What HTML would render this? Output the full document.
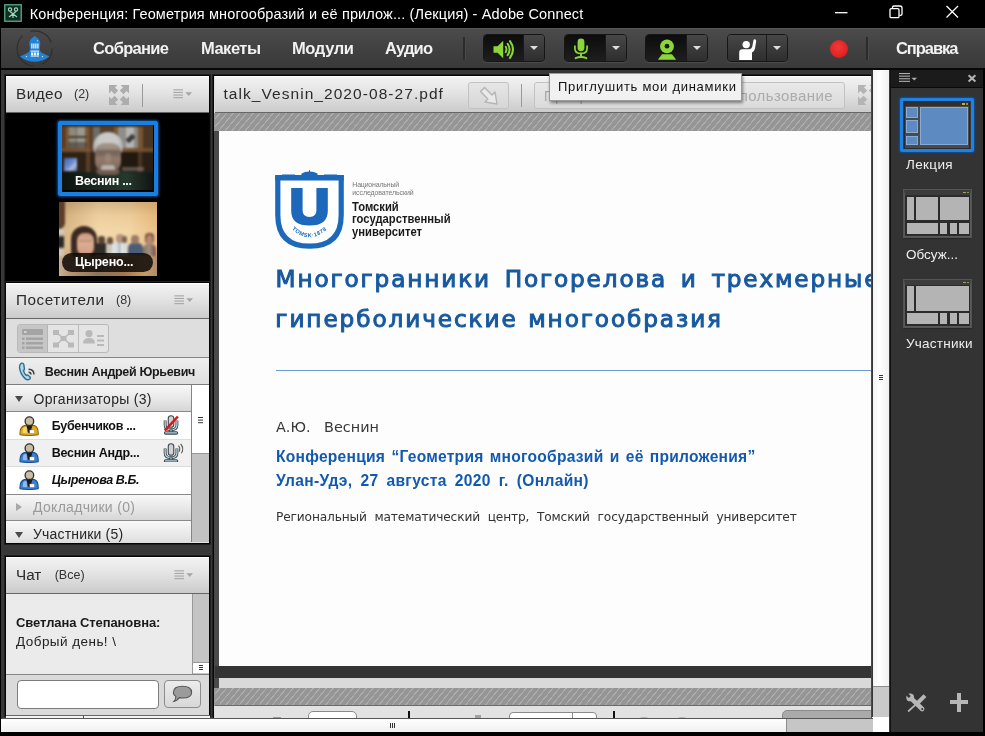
<!DOCTYPE html>
<html lang="ru">
<head>
<meta charset="utf-8">
<title>Adobe Connect</title>
<style>
*{box-sizing:border-box;margin:0;padding:0}
html,body{width:985px;height:736px;overflow:hidden;background:#000}
body{position:relative;font-family:"Liberation Sans",sans-serif;color:#222;will-change:transform}
.abs{position:absolute}
.t{position:absolute;white-space:nowrap;line-height:1}
/* title bar */
#titlebar{left:0;top:0;width:985px;height:28px;background:#000}
#title{left:29.8px;top:6.9px;font-size:14.5px;color:#fff;letter-spacing:.13px}
/* menubar */
#menubar{left:1px;top:28px;width:984px;height:40px;background:linear-gradient(#4b4b4b,#424242 45%,#393939);border-top:1px solid #565656}
.menu{top:40.1px;font-size:16.5px;font-weight:bold;color:#f2f2f2}
.msep{width:2px;top:37px;height:23px;background:#2b2b2b;box-shadow:1px 0 0 #4a4a4a}
.tbtn{top:34px;height:28px;border:1px solid #161616;border-radius:4px;overflow:hidden;box-shadow:0 1px 0 #4a4a4a}
.tbtn .l{position:absolute;left:0;top:0;bottom:0;background:linear-gradient(#0c0c0c,#1e1e1e)}
.tbtn .r{position:absolute;right:0;top:0;bottom:0;width:21px;background:linear-gradient(#474747,#2e2e2e);border-left:1px solid #1a1a1a}
.tbtn .r:after{content:"";position:absolute;left:5.7px;top:11.4px;border:4.3px solid transparent;border-top:4.5px solid #dedede;border-bottom:0}
/* workspace */
#work{left:0;top:68px;width:985px;height:665px;background:#383838;border-top:2px solid #080808}
.panel{background:#e6e6e6;border:1px solid #050505;box-shadow:0 0 0 1px #202020;overflow:hidden}
.phead{position:absolute;left:0;right:0;top:0;height:37px;background:linear-gradient(#f2f2f2,#e3e3e3 45%,#cbcbcb);border-bottom:1px solid #666;border-top:1px solid #fff}
.ptitle{font-size:15.3px;color:#2a2a2a;top:9px;left:10px}
.pcount{font-size:12.5px;color:#333;top:11.4px}
.pmenu{width:19px;height:10px}
.hatch{background:#959595 repeating-linear-gradient(130deg,transparent 0 3.2px,#adadad 3.4px 4.4px,transparent 4.6px 5.1px)}
.tb{background:#5e8ac2;border:1px solid #86abd9}
.tf{background:#2b2b2b;border:1px solid #5a5a5a;border-top:5px solid #3c3c3c;outline:1px solid #555;box-shadow:0 1px 2px #111}
.tg{background:#b4b4b4}
</style>
</head>
<body>

<!-- ================= TITLE BAR ================= -->
<div id="titlebar" class="abs">
  <svg class="abs" style="left:4px;top:4px" width="18" height="18" viewBox="0 0 18 18">
    <rect x="0.75" y="0.75" width="16.5" height="16.5" fill="#0b3325" stroke="#5a9c7e" stroke-width="1.4"/>
    <g fill="none" stroke="#a9d4be" stroke-width="1.15">
      <circle cx="6" cy="5.5" r="1.6"/><circle cx="12" cy="5.5" r="1.6"/>
      <path d="M5 13 L12 7.5 M13 13 L6 7.5 M9 10 V14"/>
    </g>
  </svg>
  <div id="title" class="t">Конференция: Геометрия многообразий и её прилож... (Лекция) - Adobe Connect</div>
  <svg class="abs" style="left:826px;top:0" width="150" height="28" viewBox="0 0 150 28">
    <g stroke="#fff" stroke-width="1.3" fill="none">
      <path d="M9 12.7 H21.5"/>
      <rect x="64" y="8.6" width="9" height="9" rx="1.2"/>
      <path d="M66.5 8.4 V7.4 Q66.5 6 68 6 H74 Q76 6 76 8 V14 Q76 15.4 74.6 15.4 H73.4"/>
      <path d="M120.5 6 L132 17.5 M132 6 L120.5 17.5"/>
    </g>
  </svg>
</div>

<!-- ================= MENU BAR ================= -->
<div id="menubar" class="abs"></div>
<svg class="abs" style="left:15px;top:29px" width="40" height="39" viewBox="0 0 40 39">
  <circle cx="19.7" cy="19.4" r="17.6" fill="none" stroke="#2b2b2b" stroke-width="1.2" stroke-dasharray="20 9 40 9 26 7" opacity=".85"/>
  <path d="M4.8 27.5 L13 23.8 Q15.8 21.5 14.6 17 Q13.6 12 16.5 9.5 L19.6 7 L23 9.5 Q26 12 25 17 Q23.8 21.5 26.6 23.8 L34.6 27.5 Q27 32.8 19.7 32.8 Q12 32.8 4.8 27.5 Z" fill="#2482d6"/>
  <g fill="#e8f2fb">
    <rect x="16.2" y="14.5" width="1.3" height="5"/><rect x="18.2" y="14.5" width="1.3" height="5"/><rect x="20.2" y="14.5" width="1.3" height="5"/><rect x="22.2" y="14.5" width="1.3" height="5"/>
    <rect x="15.6" y="21.6" width="8.4" height="1.1"/><rect x="16" y="23.4" width="2.2" height="3"/><rect x="18.9" y="23.4" width="2.2" height="3"/><rect x="21.8" y="23.4" width="2.2" height="3"/>
    <rect x="15.6" y="26.6" width="8.4" height="1"/>
    <circle cx="11.5" cy="27.6" r="0.7"/><circle cx="27.5" cy="27.6" r="0.7"/><circle cx="22.5" cy="11.8" r="0.6"/>
  </g>
</svg>
<div class="t menu" id="m1" style="left:93px;letter-spacing:-.68px">Собрание</div>
<div class="t menu" id="m2" style="left:201px;letter-spacing:-.5px">Макеты</div>
<div class="t menu" id="m3" style="left:292px;letter-spacing:-.38px">Модули</div>
<div class="t menu" id="m4" style="left:385px;letter-spacing:-.85px">Аудио</div>
<div class="abs msep" style="left:463px"></div>

<!-- speaker -->
<div class="abs tbtn" style="left:483px;width:62px"><div class="l" style="width:41px"></div><div class="r"></div>
  <svg class="abs" style="left:9px;top:5px" width="23" height="19" viewBox="0 0 23 19">
    <path d="M0.5 6.2 H4.6 L10.2 0.8 V18.2 L4.6 12.8 H0.5 Z" fill="#8cd63a"/>
    <g fill="none" stroke="#8cd63a" stroke-linecap="round">
      <path d="M12.6 6.6 Q14.6 9.5 12.6 12.4" stroke-width="1.7"/>
      <path d="M14.6 3.8 Q18.6 9.5 14.6 15.2" stroke-width="2"/>
      <path d="M17 1.2 Q23 9.5 17 17.8" stroke-width="2.1"/>
    </g>
  </svg>
</div>
<!-- mic -->
<div class="abs tbtn" style="left:564px;width:63px"><div class="l" style="width:41px"></div><div class="r"></div>
  <svg class="abs" style="left:8px;top:3px" width="16" height="22" viewBox="0 0 16 22">
    <rect x="4.6" y="0.6" width="6.8" height="12.6" rx="3.4" fill="#8cd63a"/>
    <path d="M1.9 7.5 V10.4 Q1.9 15.4 8 15.4 Q14.1 15.4 14.1 10.4 V7.5" fill="none" stroke="#8cd63a" stroke-width="1.7"/>
    <path d="M8 15.4 V19" stroke="#8cd63a" stroke-width="2"/>
    <path d="M2.6 20.2 Q8 17.8 13.4 20.2" fill="none" stroke="#8cd63a" stroke-width="1.9" stroke-linecap="round"/>
  </svg>
</div>
<!-- webcam -->
<div class="abs tbtn" style="left:645px;width:63px"><div class="l" style="width:41px"></div><div class="r"></div>
  <svg class="abs" style="left:10px;top:3px" width="22" height="23" viewBox="0 0 22 23">
    <path d="M1.8 21.8 L6 16.2 H16 L20.2 21.8 Z" fill="#8cd63a"/>
    <circle cx="11" cy="8.4" r="6.9" fill="#8cd63a"/>
    <circle cx="11" cy="8.2" r="2.4" fill="#15200a"/>
  </svg>
</div>
<!-- raise hand -->
<div class="abs tbtn" style="left:727px;width:61px"><div class="l" style="width:40px;background:linear-gradient(#474747,#2e2e2e)"></div><div class="r"></div>
  <svg class="abs" style="left:10px;top:3px" width="20" height="23" viewBox="0 0 20 23">
    <circle cx="8.2" cy="6.6" r="3.7" fill="#fff"/>
    <path d="M1.2 22 V14.5 Q1.2 11.2 4.6 11.2 H11.4 Q13.6 11.2 14.3 8.6 L15.4 2.6 Q15.7 1 17 1.2 Q18.4 1.5 18.2 3.2 L17 10.6 Q16.4 13.6 14 14.6 V22 Z" fill="#fff"/>
  </svg>
</div>
<div class="abs" style="left:830px;top:39.5px;width:18px;height:18px;border-radius:50%;background:radial-gradient(circle at 45% 40%,#f23a3a,#de1f1f 70%,#c81a1a)"></div>
<div class="abs msep" style="left:866px"></div>
<div class="t menu" id="m5" style="left:896px;letter-spacing:-1.05px">Справка</div>

<!-- ================= WORKSPACE ================= -->
<div id="work" class="abs"></div>

<!-- ===== Video panel ===== -->
<div class="abs panel" id="pvideo" style="left:5px;top:75px;width:205px;height:208px;background:#000">
  <div class="phead">
    <div class="t ptitle" id="pv" style="letter-spacing:.44px">Видео</div><div class="t pcount" id="pvc" style="left:68px">(2)</div>
    <svg class="abs" style="left:103px;top:8px" width="20" height="20" viewBox="0 0 20 20" fill="#adadad">
      <path d="M0 0 H8.4 L6 2.4 L9.2 5.6 L5.6 9.2 L2.4 6 L0 8.4 Z"/>
      <path d="M20 0 V8.4 L17.6 6 L14.4 9.2 L10.8 5.6 L14 2.4 L11.6 0 Z"/>
      <path d="M0 20 V11.6 L2.4 14 L5.6 10.8 L9.2 14.4 L6 17.6 L8.4 20 Z"/>
      <path d="M20 20 H11.6 L14 17.6 L10.8 14.4 L14.4 10.8 L17.6 14 L20 11.6 Z"/>
    </svg>
    <div class="abs" style="left:136px;top:7px;width:1px;height:23px;background:#9a9a9a"></div>
    <svg class="abs pmenu" style="left:166.5px;top:12px" viewBox="0 0 19 10"><g fill="#a6a6a6"><rect x="0.4" y="0.3" width="9.6" height="1.1"/><rect x="0.4" y="2.9" width="9.6" height="1.1"/><rect x="0.4" y="5.5" width="9.6" height="1.1"/><rect x="0.4" y="8.1" width="9.6" height="1.1"/><path d="M12.4 3.2 H19 L15.7 6.9 Z"/></g></svg>
  </div>
  <!-- video 1 -->
  <div class="abs" style="left:52px;top:44.7px;width:100px;height:75px;border:4px solid #1b7fe2;border-radius:2px;box-shadow:0 0 2.5px 1px #0e4f96"></div>
  <div class="abs" style="left:56px;top:49px;width:91px;height:65px;overflow:hidden;background:#3a2a1c">
   <div class="abs" style="left:-2px;top:-2px;width:95px;height:69px;filter:blur(.9px)">
    <!-- cabinet top -->
    <div class="abs" style="left:0;top:0;width:95px;height:30px;background:linear-gradient(90deg,#5a3d24 0 6px,#7d5a38 6px 9px,#8b8a82 9px 16px,#6a6a64 16px 17px,#9a9890 17px 25px,#7d5a38 25px 29px,#5b4029 29px 33px,#6d6c66 33px 40px,#55402c 40px 54px,#7b5936 54px 58px,#8d8e8a 58px 66px,#b4b6b4 66px 74px,#8a8a86 74px 78px,#7a5533 78px 83px,#4a3422 83px 95px)"></div>
    <div class="abs" style="left:0;top:0;width:95px;height:4px;background:#4a321e"></div>
    <div class="abs" style="left:8px;top:13px;width:19px;height:1.5px;background:#4c3a28"></div>
    <div class="abs" style="left:8px;top:19px;width:19px;height:6px;background:rgba(60,52,44,.55)"></div>
    <div class="abs" style="left:66px;top:13px;width:9px;height:5px;background:#3c3a3a;transform:rotate(-42deg)"></div>
    <div class="abs" style="left:0;top:25px;width:95px;height:4px;background:linear-gradient(90deg,#6b4a2c,#7a5634 30%,#4a3422 36%,#4a3422 62%,#7a5634 68%,#6b4a2c)"></div>
    <!-- shelf dark -->
    <div class="abs" style="left:0;top:29px;width:95px;height:22px;background:linear-gradient(90deg,#2e2117 0 26px,#5a3f28 26px 30px,#33251a 30px 60px,#21180f 60px 78px,#4a3523 78px 82px,#2a1e14 82px)"></div>
    <div class="abs" style="left:4px;top:35px;width:13px;height:13px;background:linear-gradient(135deg,#3f5fa8,#6d8fd0 50%,#aebfe0 70%,#4a68b0)"></div>
    <div class="abs" style="left:62px;top:44px;width:22px;height:4px;background:rgba(150,140,130,.5)"></div>
    <!-- head -->
    <div class="abs" style="left:33px;top:9px;width:30px;height:24px;border-radius:15px 15px 8px 8px;background:radial-gradient(ellipse at 50% 42%,#c9c9c8 0 45%,#aeadab 75%,#858380 100%)"></div>
    <div class="abs" style="left:34.5px;top:20px;width:26px;height:31px;border-radius:9px 9px 13px 13px;background:linear-gradient(#a99a8e 0,#9c8b7e 18%,#73625a 28%,#7d6a5f 38%,#917a6c 50%,#8a7264 68%,#77635a 85%,#6a564b)"></div>
    <div class="abs" style="left:44.5px;top:30px;width:6px;height:10px;border-radius:3px;background:rgba(160,138,122,.7)"></div>
    <div class="abs" style="left:41px;top:42px;width:14px;height:4.5px;border-radius:3px 3px 1px 1px;background:#b9b2ac"></div>
    <!-- jacket / bottom -->
    <div class="abs" style="left:0;top:49px;width:95px;height:22px;background:linear-gradient(90deg,#0d100e 0,#15201a 25%,#1d2c23 45%,#253a2e 70%,#1a251e 85%,#0e120f)"></div>
    <div class="abs" style="left:36px;top:47px;width:24px;height:5px;border-radius:0 0 10px 10px;background:#6f5b50"></div>
   </div>
  </div>
  <div class="t" style="left:69px;top:99.4px;font-size:12.5px;font-weight:bold;color:#fff;letter-spacing:-.27px" id="v1">Веснин ...</div>
  <!-- video 2 -->
  <div class="abs" style="left:52.5px;top:126.3px;width:98.5px;height:73.3px;overflow:hidden;background:#ecc898">
   <div class="abs" style="left:-2px;top:-2px;width:103px;height:78px;filter:blur(.9px)">
    <div class="abs" style="left:0;top:0;width:103px;height:78px;background:linear-gradient(#c8a678 0,#d9b684 8px,#e9c691 15px,#f1d2a0 30px,#efcf9c 50px,#d8b284 60px,#c9a47a 78px)"></div>
    <div class="abs" style="left:0;top:0;width:103px;height:78px;background:linear-gradient(90deg,rgba(120,80,40,.25) 0,rgba(255,240,210,.18) 40%,rgba(255,240,210,.12) 70%,rgba(215,140,60,.3) 100%)"></div>
    <!-- left edge object -->
    <div class="abs" style="left:0;top:0;width:8px;height:29px;border-radius:0 0 6px 0;background:#5d3d2a"></div>
    <div class="abs" style="left:0;top:29px;width:7px;height:30px;background:linear-gradient(#d9cdb8,#cfc3ae 20%,#2a2622 28%,#2a2622 60%,#d4c8b4 66%)"></div>
    <!-- people row -->
    <div class="abs" style="left:37px;top:43px;width:15px;height:12px;border-radius:5px 5px 0 0;background:#2e2c29"></div>
    <div class="abs" style="left:41px;top:36px;width:7px;height:8px;border-radius:3px;background:#5a4436"></div>
    <div class="abs" style="left:50px;top:37px;width:6px;height:8px;border-radius:3px;background:#6a5242"></div>
    <div class="abs" style="left:49px;top:44px;width:7px;height:10px;background:#c9c6bd"></div>
    <div class="abs" style="left:55px;top:42px;width:15px;height:13px;border-radius:4px 4px 0 0;background:linear-gradient(90deg,#dfe6e6,#cfd8da 45%,#8a9498 50%,#dde4e4 56%,#d2dada)"></div>
    <div class="abs" style="left:59px;top:34px;width:8px;height:9px;border-radius:4px;background:#b89480"></div>
    <div class="abs" style="left:65px;top:36px;width:5px;height:7px;border-radius:3px;background:#7a6252"></div>
    <div class="abs" style="left:71px;top:43px;width:15px;height:12px;border-radius:5px 5px 0 0;background:#4d5c78"></div>
    <div class="abs" style="left:74px;top:35px;width:8px;height:9px;border-radius:4px;background:#9a7c68"></div>
    <div class="abs" style="left:86px;top:44px;width:13px;height:14px;border-radius:5px 5px 0 0;background:linear-gradient(90deg,#8a7464,#a09080 50%,#7a4a38)"></div>
    <div class="abs" style="left:88px;top:33px;width:9px;height:11px;border-radius:4px;background:radial-gradient(ellipse at 50% 65%,#b98a70 0 40%,#6d4430 70%)"></div>
    <!-- woman -->
    <div class="abs" style="left:14px;top:26px;width:26px;height:32px;border-radius:13px 13px 6px 6px;background:#3a2821"></div>
    <div class="abs" style="left:20px;top:33px;width:17px;height:23px;border-radius:7px 7px 8px 8px;background:linear-gradient(#c99a80,#dcae92 40%,#d4a288 80%,#b98a72)"></div>
    <div class="abs" style="left:22px;top:40px;width:13px;height:2px;background:rgba(90,60,50,.22)"></div>
    <!-- bottom -->
    <div class="abs" style="left:0;top:56px;width:103px;height:22px;background:linear-gradient(90deg,#c9b69c 0,#b9966e 12%,#8d7458 40%,#a07650 65%,#c99a68 85%,#a88a6a)"></div>
   </div>
   <div class="abs" style="left:3.2px;top:50.5px;width:91.3px;height:18.8px;border-radius:9.4px;background:rgba(14,11,8,.86)"></div>
  </div>
  <div class="t" style="left:69px;top:180.4px;font-size:12.5px;font-weight:bold;color:#fff;letter-spacing:-.19px" id="v2">Цырено...</div>
</div>

<!-- ===== Attendees panel ===== -->
<div class="abs panel" id="patt" style="left:5px;top:282px;width:205px;height:262px">
  <div class="phead" style="height:36px">
    <div class="t ptitle" id="pa" style="top:8px;letter-spacing:.55px">Посетители</div><div class="t pcount" id="pac" style="left:110px;top:10.4px">(8)</div>
    <svg class="abs pmenu" style="left:168px;top:11px" viewBox="0 0 19 10"><g fill="#a6a6a6"><rect x="0.4" y="0.3" width="9.6" height="1.1"/><rect x="0.4" y="2.9" width="9.6" height="1.1"/><rect x="0.4" y="5.5" width="9.6" height="1.1"/><rect x="0.4" y="8.1" width="9.6" height="1.1"/><path d="M12.4 3.2 H19 L15.7 6.9 Z"/></g></svg>
  </div>
  <!-- view toolbar -->
  <div class="abs" style="left:0;top:36px;width:204px;height:39px;background:#dedede;border-bottom:1px solid #858585"></div>
  <div class="abs" style="left:11px;top:41px;width:92px;height:29px;border:1px solid #b9b9b9;border-radius:3px;background:#e4e4e4;overflow:hidden">
    <div class="abs" style="left:0;top:0;width:30px;height:27px;background:#c6c6c6;border-right:1px solid #b4b4b4"></div>
    <div class="abs" style="left:60px;top:0;width:1px;height:27px;background:#bdbdbd"></div>
    <svg class="abs" style="left:0;top:0" width="90" height="27" viewBox="0 0 90 27">
      <g fill="#a4a4a4">
        <rect x="4" y="4" width="21" height="6" rx="1"/><rect x="6" y="6" width="2.5" height="2" fill="#d2d2d2"/>
        <rect x="4" y="12.5" width="2.5" height="2.5"/><rect x="8" y="12.5" width="17" height="2.5"/>
        <rect x="4" y="17" width="2.5" height="2.5"/><rect x="8" y="17" width="17" height="2.5"/>
        <rect x="4" y="21.5" width="2.5" height="2.5"/><rect x="8" y="21.5" width="17" height="2.5"/>
      </g>
      <g fill="#b9b9b9" stroke="#b9b9b9">
        <path d="M38 7 L53 20 M53 7 L38 20" stroke-width="1.6" fill="none"/>
        <rect x="35" y="5" width="6" height="5" stroke="none"/><rect x="50" y="5" width="6" height="5" stroke="none"/>
        <rect x="35" y="17.5" width="6" height="5" stroke="none"/><rect x="50" y="17.5" width="6" height="5" stroke="none"/>
        <rect x="42.5" y="11" width="6" height="5" stroke="none"/>
      </g>
      <g fill="#b9b9b9">
        <circle cx="71" cy="8.6" r="3.6"/><path d="M65 18.5 Q65 13 71 13 Q77 13 77 18.5 Z"/>
        <rect x="79" y="10" width="7" height="2"/><rect x="79" y="14.5" width="7" height="2"/><rect x="79" y="19" width="7" height="2"/>
      </g>
    </svg>
  </div>
  <!-- speaker row -->
  <div class="abs" style="left:0;top:75px;width:204px;height:27px;background:linear-gradient(#efefef,#dedede);border-bottom:1px solid #7d7d7d"></div>
  <svg class="abs" style="left:12px;top:79px" width="20" height="20" viewBox="0 0 20 20">
    <path d="M3.4 1.2 Q1.2 2.2 1.6 6.2 Q2.4 12.4 7.2 16.6 Q9.6 18.6 11.8 17 Q12.8 16 11.8 14.8 L10 13.2 Q9 12.6 8.2 13.4 Q6.4 12.4 5.4 8.4 Q6.6 8 6.4 6.8 L5.8 2.4 Q5.2 0.8 3.4 1.2 Z" fill="#b8d8e6" stroke="#2d6f8e" stroke-width="1.4"/>
    <g fill="none" stroke="#3c3c3c" stroke-width="1.4"><path d="M10.6 10.2 Q13 10.2 13 12.6"/><path d="M10.6 7.2 Q16 7.2 16 12.6"/></g>
  </svg>
  <div class="t" style="left:38.7px;top:82.7px;font-size:12.5px;font-weight:bold;color:#1a1a1a;letter-spacing:-.32px" id="spk">Веснин Андрей Юрьевич</div>

  <!-- list -->
  <div class="abs" style="left:0;top:102px;width:186px;height:157px;background:#fff;border-right:1px solid #858585"></div>
  <div class="abs ghead" style="left:0;top:102px;width:185px;height:27px;background:linear-gradient(#f8f8f8,#e9e9e9 50%,#d6d6d6);border-bottom:1px solid #8a8a8a"></div>
  <div class="abs" style="left:9px;top:113px;border:4px solid transparent;border-top:6px solid #4a4a4a;border-bottom:0"></div>
  <div class="t" style="left:27.5px;top:109px;font-size:14px;color:#262626;letter-spacing:.29px" id="g1">Организаторы (3)</div>

  <div class="abs" style="left:0;top:156px;width:185px;height:28px;background:#f0f0f0;border-top:1px solid #dcdcdc;border-bottom:1px solid #dcdcdc"></div>
  <div class="t" style="left:45.8px;top:137.2px;font-size:12.5px;font-weight:bold;color:#111;letter-spacing:-.31px" id="n1">Бубенчиков ...</div>
  <div class="t" style="left:45.8px;top:163.5px;font-size:12.5px;font-weight:bold;color:#111;letter-spacing:-.29px" id="n2">Веснин Андр...</div>
  <div class="t" style="left:45.8px;top:190.9px;font-size:12.5px;font-weight:bold;font-style:italic;color:#111;letter-spacing:-.37px" id="n3">Цыренова В.Б.</div>

  <!-- user icons -->
  <svg class="abs" style="left:13px;top:133px" width="20" height="20" viewBox="0 0 20 20">
    <path d="M1 18.6 Q0.6 11 5.4 9.6 L10.4 8.8 L15.2 9.6 Q19.6 11 19.2 18.6 Q10 20.4 1 18.6 Z" fill="#e3aa1e" stroke="#8f6408" stroke-width="1.1"/>
    <path d="M4.4 12 Q6 10.8 7.6 11.2 L8 17 Q5.6 17.4 3.6 16.6 Z" fill="#f6d774"/>
    <path d="M7.2 9.2 L13.6 9.2 L12.4 13 L12 16 L10.4 17.6 L8.8 16 L8.4 13 Z" fill="#1b1b1b"/>
    <circle cx="10.4" cy="5.2" r="4.3" fill="#cbbda4" stroke="#2e2e2e" stroke-width="1.3"/>
    <rect x="10.8" y="14" width="4.4" height="3.2" fill="#fff" stroke="#999" stroke-width=".4"/>
  </svg>
  <svg class="abs" style="left:13px;top:160px" width="20" height="20" viewBox="0 0 20 20">
    <path d="M1 18.6 Q0.6 11 5.4 9.6 L10.4 8.8 L15.2 9.6 Q19.6 11 19.2 18.6 Q10 20.4 1 18.6 Z" fill="#3a7fd2" stroke="#1a4c92" stroke-width="1.1"/>
    <path d="M4.4 12 Q6 10.8 7.6 11.2 L8 17 Q5.6 17.4 3.6 16.6 Z" fill="#8fbcf0"/>
    <path d="M7.2 9.2 L13.6 9.2 L12.4 13 L12 16 L10.4 17.6 L8.8 16 L8.4 13 Z" fill="#1b1b1b"/>
    <circle cx="10.4" cy="5.2" r="4.3" fill="#cbbda4" stroke="#2e2e2e" stroke-width="1.3"/>
    <rect x="10.8" y="14" width="4.4" height="3.2" fill="#fff" stroke="#999" stroke-width=".4"/>
  </svg>
  <svg class="abs" style="left:13px;top:187px" width="20" height="20" viewBox="0 0 20 20">
    <path d="M1 18.6 Q0.6 11 5.4 9.6 L10.4 8.8 L15.2 9.6 Q19.6 11 19.2 18.6 Q10 20.4 1 18.6 Z" fill="#3a7fd2" stroke="#1a4c92" stroke-width="1.1"/>
    <path d="M4.4 12 Q6 10.8 7.6 11.2 L8 17 Q5.6 17.4 3.6 16.6 Z" fill="#8fbcf0"/>
    <path d="M7.2 9.2 L13.6 9.2 L12.4 13 L12 16 L10.4 17.6 L8.8 16 L8.4 13 Z" fill="#1b1b1b"/>
    <circle cx="10.4" cy="5.2" r="4.3" fill="#cbbda4" stroke="#2e2e2e" stroke-width="1.3"/>
    <rect x="10.8" y="14" width="4.4" height="3.2" fill="#fff" stroke="#999" stroke-width=".4"/>
  </svg>
  <!-- mic icons -->
  <svg class="abs" style="left:157.3px;top:132.4px" width="23.5" height="19.6" viewBox="0 0 24 21" preserveAspectRatio="none">
    <rect x="5.4" y="0.8" width="5.6" height="12.4" rx="2.8" fill="#d2d2d2" stroke="#3d4b53" stroke-width="1.15"/>
    <path d="M2.2 6 V10.6 Q2.2 15.8 8.2 15.8 Q14.2 15.8 14.2 10.6 V6" fill="none" stroke="#3d4b53" stroke-width="3"/>
    <path d="M2.2 6.4 V10.6 Q2.2 15.8 8.2 15.8 Q14.2 15.8 14.2 10.6 V6.4" fill="none" stroke="#bdd8e5" stroke-width="1.25"/>
    <rect x="6.7" y="16" width="3" height="3" fill="#b4d0de" stroke="#3d4b53" stroke-width="1"/>
    <rect x="1.4" y="17.9" width="13.6" height="2.6" rx="1.3" fill="#b4d0de" stroke="#3d4b53" stroke-width="1.1"/>
    <path d="M15.2 1.6 L1.8 16.8" stroke="#e11414" stroke-width="2.6"/>
  </svg>
  <svg class="abs" style="left:157.3px;top:159.6px" width="23.5" height="19.6" viewBox="0 0 24 21" preserveAspectRatio="none">
    <rect x="5.4" y="0.8" width="5.6" height="12.4" rx="2.8" fill="#d2d2d2" stroke="#3d4b53" stroke-width="1.15"/>
    <path d="M2.2 6 V10.6 Q2.2 15.8 8.2 15.8 Q14.2 15.8 14.2 10.6 V6" fill="none" stroke="#3d4b53" stroke-width="3"/>
    <path d="M2.2 6.4 V10.6 Q2.2 15.8 8.2 15.8 Q14.2 15.8 14.2 10.6 V6.4" fill="none" stroke="#bdd8e5" stroke-width="1.25"/>
    <rect x="6.7" y="16" width="3" height="3" fill="#b4d0de" stroke="#3d4b53" stroke-width="1"/>
    <rect x="1.4" y="17.9" width="13.6" height="2.6" rx="1.3" fill="#b4d0de" stroke="#3d4b53" stroke-width="1.1"/>
    <g fill="none" stroke="#555" stroke-width="1.1"><path d="M15.8 2.8 Q18.2 6 16.4 9.4"/><path d="M18 1 Q22 6 18.8 11"/></g>
  </svg>

  <div class="abs ghead" style="left:0;top:211px;width:185px;height:27px;background:linear-gradient(#f8f8f8,#e9e9e9 50%,#d6d6d6);border-top:1px solid #8a8a8a;border-bottom:1px solid #8a8a8a"></div>
  <div class="abs" style="left:10px;top:220px;border:4px solid transparent;border-left:6px solid #a8a8a8;border-right:0"></div>
  <div class="t" style="left:27px;top:216.6px;font-size:14px;color:#9a9a9a;letter-spacing:.31px" id="g2">Докладчики (0)</div>
  <div class="abs ghead" style="left:0;top:238px;width:185px;height:27px;background:linear-gradient(#f8f8f8,#e9e9e9 50%,#d6d6d6)"></div>
  <div class="abs" style="left:9px;top:249px;border:4px solid transparent;border-top:6px solid #4a4a4a;border-bottom:0"></div>
  <div class="t" style="left:27px;top:243.8px;font-size:14px;color:#262626;letter-spacing:.18px" id="g3">Участники (5)</div>

  <!-- list scrollbar -->
  <div class="abs" style="left:186px;top:102px;width:17px;height:157px;background:#c2c2c2"></div>
  <div class="abs" style="left:186px;top:102px;width:17px;height:69px;background:#fff;border-bottom:1px solid #999"></div>
  <div class="abs" style="left:192px;top:134px;width:5px;height:1.2px;background:#333;box-shadow:0 2.6px 0 #333,0 5.2px 0 #333"></div>
</div>

<!-- ===== Chat panel ===== -->
<div class="abs panel" id="pchat" style="left:5px;top:556px;width:205px;height:160px;background:#ebebeb">
  <div class="phead" style="height:37px">
    <div class="t ptitle" id="pc" style="top:8.5px">Чат</div><div class="t pcount" id="pcc" style="left:48.7px;top:10.9px">(Все)</div>
    <svg class="abs pmenu" style="left:168px;top:11.5px" viewBox="0 0 19 10"><g fill="#a6a6a6"><rect x="0.4" y="0.3" width="9.6" height="1.1"/><rect x="0.4" y="2.9" width="9.6" height="1.1"/><rect x="0.4" y="5.5" width="9.6" height="1.1"/><rect x="0.4" y="8.1" width="9.6" height="1.1"/><path d="M12.4 3.2 H19 L15.7 6.9 Z"/></g></svg>
  </div>
  <div class="t" style="left:10px;top:59.1px;font-size:13px;font-weight:bold;color:#1a1a1a;letter-spacing:-.08px" id="c1">Светлана Степановна:</div>
  <div class="t" style="left:10px;top:77.7px;font-size:13.5px;color:#222;letter-spacing:.45px" id="c2">Добрый день! \</div>
  <!-- chat scrollbar -->
  <div class="abs" style="left:186px;top:37px;width:17px;height:81px;background:#c4c4c4;border-left:1px solid #999"></div>
  <div class="abs" style="left:187px;top:105px;width:16px;height:11px;background:#fff;border-top:1px solid #999"></div>
  <div class="abs" style="left:193px;top:108px;width:4px;height:1px;background:#333;box-shadow:0 2px 0 #333,0 4px 0 #333"></div>
  <!-- input area -->
  <div class="abs" style="left:0;top:117px;width:204px;height:41px;background:#dadada;border-top:1px solid #858585"></div>
  <div class="abs" style="left:11px;top:123px;width:142px;height:29px;background:#fff;border:1px solid #7c7c7c;border-radius:4px"></div>
  <div class="abs" style="left:158px;top:123px;width:37px;height:28px;background:linear-gradient(#ececec,#d8d8d8);border:1px solid #8c8c8c;border-radius:4px"></div>
  <svg class="abs" style="left:165px;top:128px" width="24" height="19" viewBox="0 0 24 19">
    <path d="M11.6 1.2 Q20.6 1.2 20.6 7.4 Q20.6 13 11.6 13 Q9.6 13 8.2 12.6 Q6.6 15.8 3 16.4 Q5.2 14.4 4.8 11.4 Q2.4 9.8 2.4 7.4 Q2.4 1.2 11.6 1.2 Z" fill="#9b9b9b" stroke="#555" stroke-width="1.1"/>
  </svg>
</div>
<!-- sliver of next panel -->
<div class="abs" style="left:6px;top:715px;width:204px;height:3px;background:#f3f3f3;border-top:1px solid #666"></div>
<div class="abs" style="left:83px;top:715px;width:1px;height:3px;background:#555"></div>

<!-- ===== Main share panel ===== -->
<div class="abs" id="pmain" style="left:213px;top:75px;width:659px;height:643px;background:#dcdcdc;border-left:1px solid #050505;border-top:1px solid #050505;border-right:1px solid #4a4a4a;box-shadow:-1px -1px 0 0 #202020;overflow:hidden">
  <div class="abs" style="left:0;top:37px;width:1px;height:18px;background:#999"></div>
  <div class="abs" style="left:0;top:54.5px;width:1px;height:558px;background:#4a4a4a"></div>
  <div class="abs" style="left:0;top:612px;width:1px;height:18px;background:#999"></div>
  <div class="abs" style="left:1px;top:0;width:658px;height:643px">
  <div class="phead" style="height:37px">
    <div class="t" style="left:8.4px;top:8.9px;font-size:15.5px;color:#2b2b2b;letter-spacing:1.06px" id="fname">talk_Vesnin_2020-08-27.pdf</div>
    <div class="abs" style="left:253px;top:5px;width:41px;height:27px;border:1px solid #c2c2c2;border-radius:3px;background:linear-gradient(#e6e6e6,#d6d6d6)"></div>
    <svg class="abs" style="left:264px;top:9px" width="20" height="20" viewBox="0 0 20 20"><path d="M1.5 5.6 L5.6 1.5 L13 8.9 L16 5.9 L18 18 L5.9 16 L8.9 13 Z" fill="#e9e9e9" stroke="#b5b5b5" stroke-width="1.4" stroke-linejoin="round"/></svg>
    <div class="abs" style="left:306px;top:7px;width:1px;height:23px;background:#9a9a9a"></div>
    <div class="abs" style="left:319px;top:5px;width:311px;height:27px;border:1px solid #c2c2c2;border-radius:3px;background:linear-gradient(#e9e9e9,#dadada);overflow:hidden">
      <div class="t" style="right:11px;top:5px;font-size:15px;color:#ababab;letter-spacing:.4px">Прекратить совместное использование</div>
    </div>
    <svg class="abs" style="left:643px;top:8px" width="20" height="20" viewBox="0 0 20 20" fill="#b4b4b4">
      <path d="M0 0 H8.4 L6 2.4 L9.2 5.6 L5.6 9.2 L2.4 6 L0 8.4 Z"/>
      <path d="M0 20 V11.6 L2.4 14 L5.6 10.8 L9.2 14.4 L6 17.6 L8.4 20 Z"/>
      <path d="M20 0 V8.4 L17.6 6 L14.4 9.2 L10.8 5.6 L14 2.4 L11.6 0 Z"/>
    </svg>
  </div>
  <!-- hatched top -->
  <div class="abs hatch" style="left:0;top:37px;width:657px;height:18px"></div>
  <!-- dark left strip + slide -->
  <div class="abs" style="left:0;top:54.5px;width:4.4px;height:548.5px;background:#4a4a4a"></div>
  <div class="abs" id="slide" style="left:4.3px;top:54.5px;width:652.7px;height:536.5px;background:#fdfdfd"></div>
  <div class="abs" style="left:0;top:590px;width:657px;height:12px;background:#343434"></div>
  <div class="abs" style="left:4.3px;top:602px;width:652.7px;height:10px;background:#d9d9d9"></div>
  <div class="abs" style="left:0;top:602px;width:4.3px;height:10px;background:#4a4a4a"></div>
  <div class="abs hatch" style="left:0;top:612px;width:657px;height:18px;border-bottom:1px solid #6a6a6a"></div>
  <div class="abs" style="left:0;top:630px;width:657px;height:15px;background:#e2e2e2"></div>
  <div class="abs" style="left:93px;top:635px;width:49px;height:12px;background:#fff;border:1px solid #8a8a8a;border-radius:5px"></div>
  <div class="abs" style="left:193px;top:635px;width:2px;height:8px;background:#111"></div>
  <div class="abs" style="left:294px;top:636px;width:88px;height:12px;background:#fff;border:1px solid #8a8a8a;border-radius:4px"></div>
  <div class="abs" style="left:357px;top:636px;width:1px;height:12px;background:#8a8a8a"></div>
  <div class="abs" style="left:398px;top:635px;width:2px;height:8px;background:#111"></div>
  <div class="abs" style="left:58px;top:641px;width:8px;height:3px;background:#9a9a9a"></div><div class="abs" style="left:260px;top:639px;width:6px;height:5px;background:#a2a2a2"></div><div class="abs" style="left:424px;top:641px;width:10px;height:4px;border-radius:5px 5px 0 0;background:#b4b4b4"></div><div class="abs" style="left:462px;top:641px;width:10px;height:4px;border-radius:5px 5px 0 0;background:#b4b4b4"></div>
  <div class="abs" style="left:567px;top:634px;width:95px;height:12px;background:#aaa;border:1px solid #8a8a8a;border-radius:5px"></div>
</div>
</div>

<!-- slide content (absolute page coords) -->
<svg class="abs" style="left:274px;top:170px" width="72" height="82" viewBox="0 0 72 82">
  <path d="M3.8 7.5 H67.2 V45 Q67.2 76.2 35.5 76.2 Q3.8 76.2 3.8 45 Z" fill="#fff" stroke="#1c68ba" stroke-width="5.2"/>
  <path d="M1.2 10.5 V5.6 H8 V4.4 H21 V5.6 H27.5 V3.6 Q31 1.6 35 1.5 V0.2 H36 V1.5 Q40 1.6 43.5 3.6 V5.6 H50 V4.4 H63 V5.6 H69.8 V10.5 Z" fill="#1c68ba"/>
  <path d="M17.2 18 H28.6 V40.5 Q28.6 47 35.5 47 Q42.4 47 42.4 40.5 V18 H53.8 V41 Q53.8 55.6 35.5 55.6 Q17.2 55.6 17.2 41 Z" fill="#1c68ba"/>
  <path id="arc" d="M13.5 55 Q35.5 80 58.5 54" fill="none"/>
  <text font-family="Liberation Sans,sans-serif" font-size="5.6" font-weight="bold" fill="#1c68ba" letter-spacing=".5"><textPath href="#arc" startOffset="6">TOMSK·1878</textPath></text>
</svg>
<div class="t" style="left:352.3px;top:180.7px;font-size:7px;color:#787878;letter-spacing:-.2px" id="l1">Национальный</div>
<div class="t" style="left:352.3px;top:189.2px;font-size:7px;color:#787878;letter-spacing:-.1px" id="l2">исследовательский</div>
<div class="t" style="left:352.4px;top:200.8px;font-size:12.9px;font-weight:bold;color:#1a1a1a;transform:scaleX(.872);transform-origin:0 0" id="l3">Томский</div>
<div class="t" style="left:352.4px;top:213.1px;font-size:12.9px;font-weight:bold;color:#1a1a1a;transform:scaleX(.872);transform-origin:0 0" id="l4">государственный</div>
<div class="t" style="left:352.4px;top:226px;font-size:12.9px;font-weight:bold;color:#1a1a1a;transform:scaleX(.872);transform-origin:0 0" id="l5">университет</div>

<div class="abs" style="left:220px;top:260px;width:651px;height:80px;overflow:hidden">
  <div class="t" style="left:55.6px;top:5.8px;font-family:'DejaVu Sans','Liberation Sans',sans-serif;font-size:23.2px;color:#17599f;-webkit-text-stroke:1px #17599f;line-height:26px;letter-spacing:1.85px;word-spacing:4.5px" id="h1">Многогранники Погорелова и трехмерные</div>
  <div class="t" style="left:55.3px;top:46.2px;font-family:'DejaVu Sans','Liberation Sans',sans-serif;font-size:23.2px;color:#17599f;-webkit-text-stroke:1px #17599f;line-height:26px;letter-spacing:1.9px;word-spacing:1.3px" id="h2">гиперболические многообразия</div>
</div>
<div class="abs" style="left:276px;top:370px;width:595px;height:1px;background:#6b9dd2"></div>
<div class="t" style="left:276px;top:419.5px;font-family:'DejaVu Sans',sans-serif;font-size:14.4px;color:#383838;word-spacing:9px" id="s1">А.Ю. Веснин</div>
<div class="t" style="left:276px;top:448.6px;font-size:15.6px;font-weight:bold;color:#1259b0;letter-spacing:.25px;word-spacing:1.6px" id="s2">Конференция “Геометрия многообразий и её приложения”</div>
<div class="t" style="left:276px;top:473.2px;font-size:15.6px;font-weight:bold;color:#1259b0;letter-spacing:.32px;word-spacing:3.4px" id="s3">Улан-Удэ, 27 августа 2020 г. (Онлайн)</div>
<div class="t" style="left:276px;top:510.6px;font-family:'DejaVu Sans',sans-serif;font-size:12.2px;color:#333;letter-spacing:-.15px;word-spacing:4px" id="s4">Региональный математический центр, Томский государственный университет</div>

<!-- ===== scrollbars ===== -->
<div class="abs" style="left:873px;top:70px;width:16px;height:662px;background:#c9c9c9"></div>
<div class="abs" style="left:873px;top:70px;width:16px;height:617px;background:linear-gradient(90deg,#f4f4f4,#fff 40%,#f0f0f0);border-bottom:1px solid #8c8c8c"></div>
<div class="abs" style="left:879px;top:375px;width:4px;height:1px;background:#333;box-shadow:0 2px 0 #333,0 4px 0 #333"></div>
<div class="abs" style="left:872px;top:717px;width:17px;height:15px;background:#fff"></div>
<div class="abs" style="left:1px;top:718px;width:872px;height:14px;background:#c6c6c6;border-top:1px solid #555"></div>
<div class="abs" style="left:1px;top:719px;width:786px;height:13px;background:linear-gradient(#fff,#f0f0f0);border-right:1px solid #8c8c8c"></div>
<div class="abs" style="left:390px;top:723px;width:1px;height:5px;background:#333;box-shadow:2px 0 0 #333,4px 0 0 #333"></div>

<!-- ===== Right layouts panel ===== -->
<div class="abs" id="pright" style="left:890px;top:70px;width:93px;height:663px;background:#333;border-left:1px solid #111">
  <div class="abs" style="left:0;top:0;width:92px;height:18px;background:#1b1b1b;border-bottom:1px solid #0a0a0a"></div>
  <svg class="abs" style="left:8px;top:3px" width="19" height="10" viewBox="0 0 19 10"><g fill="#aeaeae"><rect x="0" y="0" width="11" height="1.1"/><rect x="0" y="2.6" width="11" height="1.1"/><rect x="0" y="5.2" width="11" height="1.1"/><rect x="0" y="7.8" width="11" height="1.1"/><path d="M12.5 4.8 H18 L15.25 7.6 Z"/></g></svg>
  <svg class="abs" style="left:76px;top:4px" width="10" height="9" viewBox="0 0 10 9"><path d="M1.6 1.2 L8.4 7.6 M8.4 1.2 L1.6 7.6" stroke="#b4b4b4" stroke-width="2"/></svg>

  <!-- thumb 1 selected -->
  <div class="abs" style="left:9px;top:28px;width:74px;height:54px;border:3px solid #1d82e6;border-radius:2px;background:#3a3a3a;box-shadow:0 0 2px 1px #0f4f98"></div>
  <div class="abs" style="left:13px;top:31px;width:66px;height:48px;background:#4a4a4a;border:1px solid #2a2a2a"></div>
  <div class="abs" style="left:14px;top:32px;width:64px;height:4px;background:#303030"></div>
  <div class="abs" style="left:71px;top:33.2px;width:3px;height:1.4px;background:#c9a93a"></div><div class="abs" style="left:74.5px;top:33.2px;width:2.5px;height:1.4px;background:#6aa05a"></div>
  <div class="abs tb" style="left:15px;top:37px;width:12px;height:11px"></div>
  <div class="abs tb" style="left:15px;top:50px;width:12px;height:13px"></div>
  <div class="abs tb" style="left:15px;top:66px;width:12px;height:9px"></div>
  <div class="abs tb" style="left:29px;top:37px;width:48px;height:38px"></div>
  <div class="t" style="left:15px;top:88px;font-size:13.5px;color:#efefef;letter-spacing:.35px" id="r1">Лекция</div>

  <!-- thumb 2 -->
  <div class="abs tf" style="left:13px;top:120px;width:67px;height:47px"></div>
  <div class="abs tg" style="left:16px;top:127px;width:7px;height:23px"></div>
  <div class="abs tg" style="left:25px;top:127px;width:22px;height:23px"></div>
  <div class="abs tg" style="left:49px;top:127px;width:29px;height:23px"></div>
  <div class="abs tg" style="left:16px;top:153px;width:31px;height:11px"></div>
  <div class="abs tg" style="left:49px;top:153px;width:7px;height:11px"></div>
  <div class="abs tg" style="left:58.5px;top:153px;width:7.5px;height:11px"></div>
  <div class="abs tg" style="left:68px;top:153px;width:10px;height:11px"></div>
  <div class="abs" style="left:72px;top:122px;width:3px;height:1.4px;background:#b9a040"></div><div class="abs" style="left:75.5px;top:122px;width:2.5px;height:1.4px;background:#6aa05a"></div>
  <div class="t" style="left:15px;top:178px;font-size:13.5px;color:#efefef" id="r2">Обсуж...</div>

  <!-- thumb 3 -->
  <div class="abs tf" style="left:13px;top:210px;width:67px;height:47px"></div>
  <div class="abs tg" style="left:16px;top:216px;width:7px;height:25px"></div>
  <div class="abs tg" style="left:25px;top:216px;width:53px;height:25px"></div>
  <div class="abs tg" style="left:16px;top:243px;width:31px;height:11px"></div>
  <div class="abs tg" style="left:49px;top:243px;width:7px;height:11px"></div>
  <div class="abs tg" style="left:58.5px;top:243px;width:7.5px;height:11px"></div>
  <div class="abs tg" style="left:68px;top:243px;width:10px;height:11px"></div>
  <div class="abs" style="left:72px;top:212px;width:3px;height:1.4px;background:#b9a040"></div><div class="abs" style="left:75.5px;top:212px;width:2.5px;height:1.4px;background:#6aa05a"></div>
  <div class="t" style="left:15px;top:267px;font-size:13.5px;color:#efefef;letter-spacing:.25px" id="r3">Участники</div>

  <!-- bottom icons -->
  <svg class="abs" style="left:15px;top:622.5px" width="22" height="20" viewBox="0 0 22 20">
    <g stroke="#b6b6b6" fill="none">
      <path d="M19 2.6 L11.6 10" stroke-width="4"/>
      <path d="M12.4 9.2 L2.6 18" stroke-width="1.7" stroke-linecap="round"/>
      <path d="M4.6 4.8 L16.2 16" stroke-width="4.6" stroke-linecap="round"/>
    </g>
    <circle cx="4.2" cy="4.4" r="3.9" fill="#b6b6b6"/>
    <rect x="2.9" y="-1.2" width="2.6" height="5" fill="#333" transform="rotate(-45 4.2 4.4)"/>
    <circle cx="16.3" cy="16.1" r="1.05" fill="#333"/>
  </svg>
  <div class="abs" style="left:59px;top:630px;width:18px;height:4px;background:#b6b6b6"></div>
  <div class="abs" style="left:66px;top:623px;width:4px;height:18.5px;background:#b6b6b6"></div>
</div>

<!-- ===== Tooltip ===== -->
<div class="abs" style="left:549px;top:73px;width:193px;height:28px;background:#f1f1f1;border:1px solid #9a9a9a;box-shadow:1px 2px 3px rgba(0,0,0,.45)">
  <div class="t" style="left:8px;top:5.7px;font-size:13px;color:#111;letter-spacing:.73px" id="tip">Приглушить мои динамики</div>
</div>

<div class="abs" style="left:0;top:732px;width:985px;height:4px;background:#000"></div>
<div class="abs" style="left:0;top:28px;width:1px;height:708px;background:#000"></div>
<div class="abs" style="left:983px;top:68px;width:2px;height:668px;background:#000"></div>
</body>
</html>
